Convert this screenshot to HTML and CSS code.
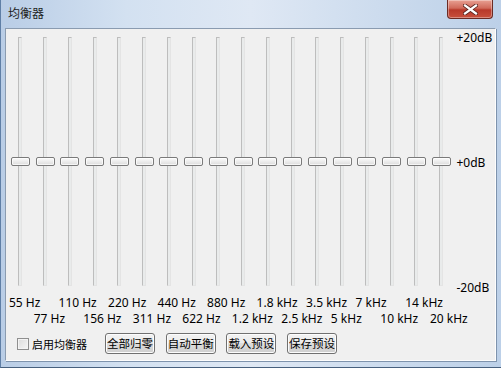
FILE: index.html
```html
<!DOCTYPE html>
<html lang="zh-CN">
<head>
<meta charset="utf-8">
<title>均衡器</title>
<link rel="stylesheet" href="styles.css">
</head>
<body>
<div class="window">
  <div class="titlebar">
    <span class="title">均衡器</span>
    <div class="close">
      <svg width="15" height="11" viewBox="0 0 15 11"><path d="M2 1.5 L13 9.5 M13 1.5 L2 9.5" stroke="#5a2520" stroke-width="4" stroke-linecap="square"/><path d="M2 1.5 L13 9.5 M13 1.5 L2 9.5" stroke="#ffffff" stroke-width="2.2" stroke-linecap="square"/></svg>
    </div>
  </div>
  <div class="client">
    <div class="eq">
      <div class="sliders">
        <div class="slider"><div class="track"></div><div class="thumb"></div></div>
        <div class="slider"><div class="track"></div><div class="thumb"></div></div>
        <div class="slider"><div class="track"></div><div class="thumb"></div></div>
        <div class="slider"><div class="track"></div><div class="thumb"></div></div>
        <div class="slider"><div class="track"></div><div class="thumb"></div></div>
        <div class="slider"><div class="track"></div><div class="thumb"></div></div>
        <div class="slider"><div class="track"></div><div class="thumb"></div></div>
        <div class="slider"><div class="track"></div><div class="thumb"></div></div>
        <div class="slider"><div class="track"></div><div class="thumb"></div></div>
        <div class="slider"><div class="track"></div><div class="thumb"></div></div>
        <div class="slider"><div class="track"></div><div class="thumb"></div></div>
        <div class="slider"><div class="track"></div><div class="thumb"></div></div>
        <div class="slider"><div class="track"></div><div class="thumb"></div></div>
        <div class="slider"><div class="track"></div><div class="thumb"></div></div>
        <div class="slider"><div class="track"></div><div class="thumb"></div></div>
        <div class="slider"><div class="track"></div><div class="thumb"></div></div>
        <div class="slider"><div class="track"></div><div class="thumb"></div></div>
        <div class="slider"><div class="track"></div><div class="thumb"></div></div>
      </div>
      <div class="scale">
        <span>+20dB</span>
        <span>+0dB</span>
        <span>-20dB</span>
      </div>
    </div>
    <div class="freqs">
      <div class="frow">
        <span>55 Hz</span><span>110 Hz</span><span>220 Hz</span><span>440 Hz</span><span>880 Hz</span><span>1.8 kHz</span><span>3.5 kHz</span><span>7 kHz</span><span>14 kHz</span>
      </div>
      <div class="frow frow2">
        <span>77 Hz</span><span>156 Hz</span><span>311 Hz</span><span>622 Hz</span><span>1.2 kHz</span><span>2.5 kHz</span><span>5 kHz</span><span>10 kHz</span><span>20 kHz</span>
      </div>
    </div>
    <div class="controls">
      <label class="check"><span class="box"></span><span>启用均衡器</span></label>
      <div class="buttons">
        <button class="btn">全部归零</button>
        <button class="btn">自动平衡</button>
        <button class="btn">载入预设</button>
        <button class="btn">保存预设</button>
      </div>
    </div>
  </div>
</div>
</body>
</html>
```

FILE: styles.css
```css
* { box-sizing: border-box; }
html, body { margin: 0; padding: 0; }
body {
  width: 501px;
  height: 368px;
  overflow: hidden;
  font-family: "Noto Sans", "Noto Sans CJK SC", sans-serif;
  font-size: 12px;
  color: #000;
}
.window {
  width: 501px;
  height: 368px;
  display: flex;
  flex-direction: column;
  background: linear-gradient(90deg, #b9cde6 0%, #d3e1f1 25%, #dfe8f4 50%, #cddcee 75%, #bcd0e8 100%);
  padding: 0 5px 6px 4px;
  border-left: 1px solid #5f7fa6;
  border-bottom: 1px solid #47607e;
}
.titlebar {
  height: 28px;
  flex: none;
  display: flex;
  align-items: flex-start;
  justify-content: space-between;
}
.title {
  font-family: "Noto Sans CJK SC", sans-serif;
  font-size: 12px;
  line-height: 16px;
  margin: 5px 0 0 3px;
  color: #1e1e1e;
}
.close {
  width: 46px;
  height: 19px;
  margin-right: 3px;
  border: 1px solid #6b2b24;
  border-top: none;
  border-radius: 0 0 4px 4px;
  background: linear-gradient(180deg, #e8a093 0%, #d0695a 45%, #b8392a 55%, #c8503c 100%);
  box-shadow: inset 0 0 0 1px rgba(255,255,255,0.35);
  display: flex;
  align-items: center;
  justify-content: center;
}
.client {
  flex: 1;
  background: #f0f0f0;
  border: 1px solid #8a9bb0;
  border-right-color: #fdfdfd;
  border-bottom-color: #fdfdfd;
  box-shadow: 1px 1px 0 #7e93ad;
  padding: 0 0 0 1px;
  display: flex;
  flex-direction: column;
}
.eq {
  display: flex;
  height: 266px;
}
.sliders {
  display: flex;
  padding-top: 8px;
  padding-left: 1px;
}
.slider {
  width: 24.76px;
  height: 249px;
  display: grid;
  place-items: center;
}
.track, .thumb { grid-area: 1 / 1; }
.track {
  width: 4px;
  height: 249px;
  background: #e9ebeb;
  border: 1px solid #bdbdbd;
  border-right-color: #e4e4e4;
  border-bottom-color: #e4e4e4;
}
.thumb {
  width: 19px;
  height: 9px;
  border: 1px solid #7a7a7a;
  border-radius: 2px;
  background: linear-gradient(180deg, #fbfbfb 0%, #ececec 50%, #dcdcdc 100%);
  box-shadow: inset 0 0 0 1px rgba(255,255,255,0.7);
}
.scale {
  display: flex;
  flex-direction: column;
  justify-content: space-between;
  margin-top: 2px;
  height: 264px;
  padding-left: 3px;
  line-height: 14px;
}
.freqs {
  padding-left: 2px;
  line-height: 16px;
}
.frow {
  display: flex;
  white-space: nowrap;
}
.frow span {
  width: 49.52px;
  flex: none;
}
.frow2 { padding-left: 24.76px; }
.controls {
  display: flex;
  align-items: center;
  margin-top: 6px;
  height: 21px;
}
.check {
  display: flex;
  align-items: center;
  margin-left: 10px;
  font-family: "Noto Sans CJK SC", sans-serif;
  font-size: 11px;
  gap: 3px;
}
.box {
  width: 12px;
  height: 12px;
  border: 1px solid #8f8f8f;
  background: linear-gradient(135deg, #dcdcdc 0%, #f6f6f6 100%);
  box-shadow: inset 0 0 0 1px #f4f4f4;
}
.buttons {
  display: flex;
  gap: 10.7px;
  margin-left: 18px;
}
.btn {
  width: 50px;
  height: 21px;
  padding: 0;
  font-family: "Noto Sans CJK SC", sans-serif;
  font-size: 11.5px;
  line-height: 19px;
  color: #000;
  border: 1px solid #707070;
  border-radius: 3px;
  background: linear-gradient(180deg, #f2f2f2 0%, #ebebeb 49%, #dddddd 50%, #cfcfcf 100%);
  box-shadow: inset 0 0 0 1px #fcfcfc;
}
```
